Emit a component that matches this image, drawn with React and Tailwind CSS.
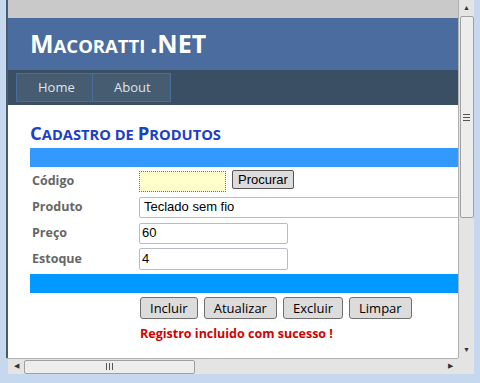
import React from 'react';

const sans = { fontFamily: '"Open Sans", "Noto Sans", sans-serif' };
const arial = { fontFamily: '"Liberation Sans", Arial, sans-serif' };

const Field = ({ label, children }) => (
  <div className="flex items-center h-[26px]">
    <div className="w-[109px] pl-[2px] text-[12.5px] font-bold text-[#666666] pt-[1px]">{label}</div>
    <div className="flex items-center gap-[6px]">{children}</div>
  </div>
);

const Btn = ({ children }) => (
  <button className="h-[22px] px-[9px] border border-[#707070] rounded-[3px] bg-[#dcdcdc] text-[13px] text-black leading-none">
    {children}
  </button>
);

export default function App() {
  return (
    <div className="w-[480px] h-[383px] bg-[#c6d8ee] flex flex-col overflow-hidden" style={sans}>
      <div className="flex pl-[6px] pr-[6px] h-[374px]">
        <div className="flex flex-col w-[468px]">
          <div className="flex h-[358px]">
            {/* viewport */}
            <div className="w-[452px] border-l-2 border-[#4c5a70] bg-white overflow-hidden flex flex-col">
              <div className="h-[18px] bg-[#c9c9c9] shrink-0"></div>
              <div className="h-[52px] bg-[#4b6c9e] flex items-center pl-[22px] shrink-0">
                <h1 className="text-white font-bold leading-none pb-[1px]">
                  <span className="text-[25px]">M</span>
                  <span className="text-[18.5px]">ACORATTI </span>
                  <span className="text-[25px]">.NET</span>
                </h1>
              </div>
              <div className="h-[35px] bg-[#3a4f63] flex items-center pl-[8px] shrink-0">
                <div className="flex h-[29px]">
                  <a className="w-[77px] flex items-center pl-[21px] bg-[#465c71] border border-[#4b6c9e] text-[13px] text-[#dde4ec]">Home</a>
                  <a className="w-[78px] flex items-center pl-[21px] bg-[#465c71] border border-[#4b6c9e] border-l-0 text-[13px] text-[#dde4ec]">About</a>
                </div>
              </div>
              <div className="pl-[22px] pt-[16px] flex flex-col w-[470px]">
                <h2 className="font-bold text-[#1d3fc2] leading-[22px] h-[27px] pt-[1px]">
                  <span className="text-[18.5px]">C</span>
                  <span className="text-[14.7px]">ADASTRO DE </span>
                  <span className="text-[18.5px]">P</span>
                  <span className="text-[14.7px]">RODUTOS</span>
                </h2>
                <div className="h-[19px] bg-[#3399ff]"></div>
                <div className="h-[1px]"></div>
                <Field label="Código">
                  <div className="w-[87px] h-[21px] bg-[#ffffcc] border border-dotted border-[#707070]"></div>
                  <button className="h-[19px] px-[5px] border border-[#555555] rounded-[2px] bg-[#dcdcdc] text-[13px] text-black leading-none mb-[3px]" style={arial}>Procurar</button>
                </Field>
                <Field label="Produto">
                  <div className="w-[330px] h-[21px] border border-[#b8bcc8] rounded-[2px] flex items-center pl-[4px] text-[13px] text-black" style={arial}>Teclado sem fio</div>
                </Field>
                <Field label="Preço">
                  <div className="w-[149px] h-[21px] border border-[#b8bcc8] rounded-[2px] flex items-center pl-[2px] text-[13px] text-black" style={arial}>60</div>
                </Field>
                <Field label="Estoque">
                  <div className="w-[149px] h-[22px] border border-[#b8bcc8] rounded-[2px] flex items-center pl-[2px] text-[13px] text-black" style={arial}>4</div>
                </Field>
                <div className="h-[2px]"></div>
                <div className="h-[19px] bg-[#0099ff]"></div>
                <div className="flex gap-[6px] pl-[110px] mt-[4px]">
                  <Btn>Incluir</Btn>
                  <Btn>Atualizar</Btn>
                  <Btn>Excluir</Btn>
                  <Btn>Limpar</Btn>
                </div>
                <div className="pl-[110px] mt-[6px] text-[12.5px] font-bold text-[#d40000]">Registro incluido com sucesso !</div>
              </div>
            </div>
            {/* vertical scrollbar */}
            <div className="w-[16px] bg-[#e4e4e4] border-l border-[#b0b0b0] flex flex-col items-center">
              <div className="h-[16px] flex items-center justify-center text-[7px] text-[#333]">▲</div>
              <div className="w-[14px] h-[202px] bg-[#ededed] border border-[#a0a0a0] rounded-[2px] flex items-center justify-center">
                <div className="flex flex-col gap-[2px]">
                  <div className="w-[7px] h-[1px] bg-[#555]"></div>
                  <div className="w-[7px] h-[1px] bg-[#555]"></div>
                  <div className="w-[7px] h-[1px] bg-[#555]"></div>
                </div>
              </div>
              <div className="flex-1"></div>
              <div className="h-[16px] flex items-center justify-center text-[7px] text-[#333]">▼</div>
            </div>
          </div>
          {/* horizontal scrollbar */}
          <div className="flex h-[16px]">
            <div className="w-[452px] border-l-2 border-[#c6d8ee] bg-[#e4e4e4] border-t border-t-[#b0b0b0] flex items-center">
              <div className="w-[16px] flex items-center justify-center text-[7px] text-[#333]">◀</div>
              <div className="w-[171px] h-[14px] bg-[#ededed] border border-[#a0a0a0] rounded-[2px] flex items-center justify-center gap-[2px]">
                <div className="w-[1px] h-[7px] bg-[#555]"></div>
                <div className="w-[1px] h-[7px] bg-[#555]"></div>
                <div className="w-[1px] h-[7px] bg-[#555]"></div>
              </div>
              <div className="flex-1"></div>
              <div className="w-[16px] flex items-center justify-center text-[7px] text-[#333]">▶</div>
            </div>
            <div className="w-[16px] bg-[#e4e4e4]"></div>
          </div>
        </div>
      </div>
    </div>
  );
}
